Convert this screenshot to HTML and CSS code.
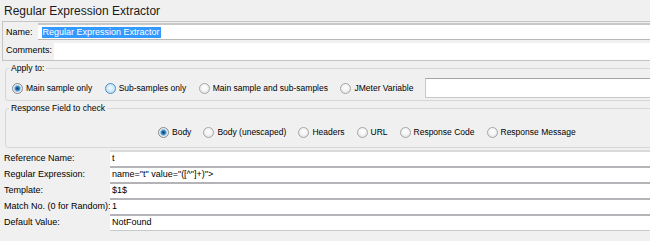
FILE: index.html
```html
<!DOCTYPE html>
<html>
<head>
<meta charset="utf-8">
<link rel="stylesheet" href="styles.css">
</head>
<body>
<div class="title">Regular Expression Extractor</div>
<div class="namebox">
  <div class="nrow">
    <span class="nlabel">Name:</span>
    <div class="tfield name"><span class="sel">Regular Expression Extractor</span></div>
  </div>
  <div class="nrow crow">
    <span class="nlabel">Comments:</span>
    <div class="tfield comments"></div>
  </div>
</div>
<fieldset class="group apply">
  <legend>Apply to:</legend>
  <div class="rrow">
    <label class="ritem"><span class="radio on"></span>Main sample only</label>
    <label class="ritem"><span class="radio hover"></span>Sub-samples only</label>
    <label class="ritem"><span class="radio"></span>Main sample and sub-samples</label>
    <label class="ritem"><span class="radio"></span>JMeter Variable</label>
    <div class="varfield"></div>
  </div>
</fieldset>
<fieldset class="group resp">
  <legend>Response Field to check</legend>
  <div class="rrow center">
    <label class="ritem"><span class="radio on"></span>Body</label>
    <label class="ritem"><span class="radio"></span>Body (unescaped)</label>
    <label class="ritem"><span class="radio"></span>Headers</label>
    <label class="ritem"><span class="radio"></span>URL</label>
    <label class="ritem"><span class="radio"></span>Response Code</label>
    <label class="ritem"><span class="radio"></span>Response Message</label>
  </div>
</fieldset>
<div class="form">
  <div class="frow"><span class="flabel">Reference Name:</span><div class="fval">t</div></div>
  <div class="frow"><span class="flabel">Regular Expression:</span><div class="fval">name="t" value="([^"]+)"&gt;</div></div>
  <div class="frow"><span class="flabel">Template:</span><div class="fval">$1$</div></div>
  <div class="frow"><span class="flabel">Match No. (0 for Random):</span><div class="fval">1</div></div>
  <div class="frow last"><span class="flabel">Default Value:</span><div class="fval">NotFound</div></div>
</div>
</body>
</html>
```
FILE: styles.css
```css
html, body {
  margin: 0;
  padding: 0;
  background: #f0f0f0;
  overflow: hidden;
}
body {
  width: 650px;
  height: 241px;
  font-family: "Liberation Sans", Arial, sans-serif;
  font-size: 9px;
  color: #000;
}
.title {
  font-size: 12px;
  line-height: 14px;
  height: 14px;
  padding: 4px 0 3px 4px;
  color: #1a1a1a;
}
.namebox {
  margin-left: 2px;
  margin-right: -4px;
  border: 1px solid #c4c4c4;
  height: 38px;
  display: flex;
  flex-direction: column;
}
.nrow {
  display: flex;
  align-items: stretch;
  height: 18px;
}
.nrow.crow {
  height: 20px;
}
.nlabel {
  padding-left: 3px;
  padding-top: 4px;
  line-height: 12px;
}
.name {
  margin-left: 5px;
  margin-top: 1px;
  border-top: 2px solid #c8c8c8;
  border-bottom: 1px solid #b8b8b8;
  height: 14px;
}
.comments {
  margin-left: 2px;
  margin-top: 3px;
  height: 17px;
}
.tfield {
  flex: 1;
  background: #fff;
  display: flex;
  align-items: center;
  padding-left: 3px;
}
.sel {
  background: #3399ff;
  color: #fff;
  line-height: 11px;
  padding: 0 1px;
  margin-left: 1px;
}
.group {
  margin: 2px -4px 0 5px;
  padding: 0;
  border: 1px solid #d6d6d6;
  border-radius: 3px;
  min-width: 0;
}
.group legend {
  margin-left: 3px;
  padding: 0 2px;
  line-height: 11px;
  font-size: 8.6px;
}
.rrow {
  display: flex;
  align-items: center;
  height: 20px;
  padding-left: 6px;
  font-size: 8.5px;
}
.rrow.center {
  padding-left: 152px;
}
.apply .rrow {
  margin-top: 4px;
  margin-bottom: 2px;
}
.resp .rrow {
  margin-top: 8px;
  margin-bottom: 5px;
}
.ritem {
  display: flex;
  align-items: center;
  margin-right: 12.5px;
  white-space: nowrap;
}
.resp .ritem {
  margin-right: 12px;
}
.radio {
  box-sizing: border-box;
  width: 11px;
  height: 11px;
  border-radius: 50%;
  border: 1px solid #a6a6a6;
  background: radial-gradient(circle at 50% 40%, #ffffff 0, #f4f4f4 45%, #d9d9d9 100%);
  margin-right: 3px;
  flex: none;
}
.radio.on {
  border-color: #8a8a8a;
  background: radial-gradient(circle at 50% 50%, #123f66 0, #1d5f96 1.2px, #4e9ad3 2.4px, #a9d2ef 3.2px, #eeeeee 3.8px, #d4d4d4 100%);
}
.radio.hover {
  border-color: #4a8fc4;
  background: radial-gradient(circle at 50% 45%, #f2f9fe 0, #cde9fb 50%, #9fd3f5 100%);
}
.varfield {
  flex: 1;
  height: 20px;
  box-sizing: border-box;
  margin-left: -1px;
  background: #fff;
  border: 1px solid #c9c9c9;
  border-top-color: #a4a4a4;
}
.form {
  margin-top: 2px;
}
.frow {
  display: flex;
  height: 16px;
}
.flabel {
  width: 106px;
  padding-left: 4px;
  line-height: 16px;
  flex: none;
  white-space: nowrap;
}
.fval {
  flex: 1;
  background: #fff;
  border-top: 2px solid #b3b3b8;
  padding-left: 2px;
  line-height: 13px;
  height: 14px;
}
.frow:first-child .fval {
  border-top-color: #d9d9dc;
}
.frow.last .fval {
  border-bottom: 1px solid #c7c7cc;
}
```
